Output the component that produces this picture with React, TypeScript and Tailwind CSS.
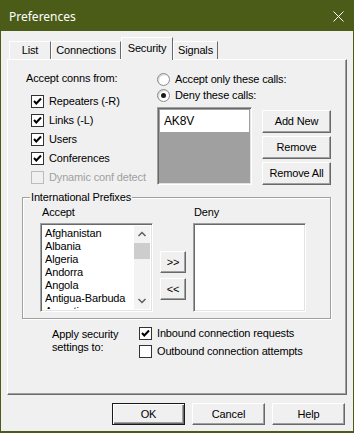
import React from "react";

function CheckBox({ checked, disabled }: { checked?: boolean; disabled?: boolean }) {
  return (
    <div
      className={
        "w-[13px] h-[13px] shrink-0 border flex items-center justify-center " +
        (disabled ? "border-[#bcbcbc] bg-[#f0f0f0]" : "border-[#333333] bg-white")
      }
    >
      {checked && (
        <svg width="11" height="11" viewBox="0 0 11 11">
          <path d="M2 5 L4.3 7.5 L9 2.5" stroke="#000" strokeWidth="2" fill="none" />
        </svg>
      )}
    </div>
  );
}

function Radio({ selected }: { selected?: boolean }) {
  return (
    <div className="w-[13px] h-[13px] shrink-0 rounded-full border border-[#8a8a8a] bg-white flex items-center justify-center shadow-[inset_1px_1px_1px_#d0d0d0]">
      {selected && <div className="w-[5px] h-[5px] rounded-full bg-[#1a1a1a]" />}
    </div>
  );
}

function Button({ children, className = "", primary }: { children: React.ReactNode; className?: string; primary?: boolean }) {
  return (
    <div
      className={
        "flex items-center justify-center bg-[#f0f0f0] text-black border whitespace-nowrap " +
        (primary
          ? "border-[#1a1a1a] shadow-[inset_1px_1px_0_white,inset_-1px_-1px_0_#696969,inset_-2px_-2px_0_#a0a0a0] "
          : "border-t-white border-l-white border-r-[#696969] border-b-[#696969] shadow-[inset_-1px_-1px_0_#a0a0a0] ") +
        className
      }
    >
      {children}
    </div>
  );
}

function Tab({ label, width, active }: { label: string; width: string; active?: boolean }) {
  return (
    <div
      className={
        "flex justify-center border-t border-l border-r border-t-white border-l-white border-r-[#696969] bg-[#f0f0f0] " +
        width +
        (active ? " h-[23px] -mb-px pt-[4px] relative z-10" : " h-[18px] pt-[2px]")
      }
    >
      <span className="leading-[13px] whitespace-nowrap">{label}</span>
    </div>
  );
}

const sunken =
  "border border-t-[#a0a0a0] border-l-[#a0a0a0] border-r-white border-b-white shadow-[inset_1px_1px_0_#696969,inset_-1px_-1px_0_#e3e3e3]";

export default function App() {
  const conns = [
    { label: "Repeaters (-R)", checked: true },
    { label: "Links (-L)", checked: true },
    { label: "Users", checked: true },
    { label: "Conferences", checked: true },
    { label: "Dynamic conf detect", disabled: true },
  ];
  const countries = ["Afghanistan", "Albania", "Algeria", "Andorra", "Angola", "Antigua-Barbuda", "Argentina"];

  return (
    <div className="w-[354px] h-[433px] bg-[#4b5c18] flex flex-col px-px pt-px pb-[2px] font-['Liberation_Sans',Arial,sans-serif] text-[11px] leading-[13px] tracking-[-0.15px] text-black overflow-hidden">
      {/* title bar */}
      <div className="h-[30px] shrink-0 flex items-center justify-between pl-[8px] pr-[9px]">
        <span className="text-white text-[12px] tracking-normal font-['Noto_Sans',sans-serif]">Preferences</span>
        <svg width="11" height="11" viewBox="0 0 11 11">
          <path d="M0.5 0.5 L10.5 10.5 M10.5 0.5 L0.5 10.5" stroke="#fff" strokeWidth="1" />
        </svg>
      </div>

      <div className="flex-1 bg-[#f0f0f0] flex flex-col">
        {/* tabs */}
        <div className="flex items-end h-[22px] mt-[6px] ml-[8px]">
          <Tab label="List" width="w-[42px]" />
          <Tab label="Connections" width="w-[70px]" />
          <Tab label="Security" width="w-[52px]" active />
          <Tab label="Signals" width="w-[45px]" />
        </div>

        {/* tab panel */}
        <div className="ml-[6px] w-[340px] h-[336px] border border-t-white border-l-white border-r-[#696969] border-b-[#696969] shadow-[inset_-1px_-1px_0_#a0a0a0] flex flex-col">
          <div className="flex pl-[18px]">
            <div className="w-[131px] pt-[11px]">
              <div className="leading-[14px]">Accept conns from:</div>
              <div className="mt-[7px] ml-[5px] flex flex-col">
                {conns.map((c) => (
                  <div key={c.label} className="h-[19px] flex items-center gap-[5px]">
                    <CheckBox checked={c.checked} disabled={c.disabled} />
                    <span className={"whitespace-nowrap " + (c.disabled ? "text-[#a0a0a0]" : "")}>{c.label}</span>
                  </div>
                ))}
              </div>
            </div>

            <div className="w-[105px] pt-[11px]">
              <div className="h-[16px] flex items-center gap-[5px]">
                <Radio />
                <span className="whitespace-nowrap">Accept only these calls:</span>
              </div>
              <div className="h-[16px] flex items-center gap-[5px]">
                <Radio selected />
                <span className="whitespace-nowrap">Deny these calls:</span>
              </div>
              <div className={"mt-[4px] w-[95px] h-[78px] bg-[#a0a0a0] p-[2px] " + sunken}>
                <div className="h-[22px] bg-white pl-[4px] flex items-center text-[12px]">AK8V</div>
              </div>
            </div>

            <div className="pt-[50px] flex flex-col gap-[3px]">
              <Button className="w-[69px] h-[23px]">Add New</Button>
              <Button className="w-[69px] h-[23px]">Remove</Button>
              <Button className="w-[69px] h-[23px]">Remove All</Button>
            </div>
          </div>

          {/* International prefixes group */}
          <div className="mt-[10px] ml-[14px] w-[309px] border border-[#a0a0a0] shadow-[inset_1px_1px_0_white,1px_1px_0_white] pb-[6px]">
            <span className="block w-fit -mt-[8px] ml-[7px] px-px bg-[#f0f0f0] leading-[14px] whitespace-nowrap">International Prefixes</span>
            <div className="flex pl-[17px]">
              <div className="flex flex-col">
                <div className="ml-[2px] mt-[1px] leading-[14px]">Accept</div>
                <div className={"mt-[4px] w-[113px] h-[89px] bg-white flex p-[2px] " + sunken}>
                  <div className="flex-1 overflow-hidden pl-[2px] pt-px">
                    {countries.map((c) => (
                      <div key={c} className="h-[13px] leading-[13px] whitespace-nowrap">{c}</div>
                    ))}
                  </div>
                  <div className="w-[16px] bg-[#f3f3f3] flex flex-col items-center">
                    <svg width="16" height="17" viewBox="0 0 16 17">
                      <path d="M4.5 10 L8 6.5 L11.5 10" stroke="#606060" strokeWidth="1.5" fill="none" />
                    </svg>
                    <div className="w-[16px] h-[16px] bg-[#cdcdcd]" />
                    <div className="flex-1" />
                    <svg width="16" height="17" viewBox="0 0 16 17">
                      <path d="M4.5 7 L8 10.5 L11.5 7" stroke="#606060" strokeWidth="1.5" fill="none" />
                    </svg>
                  </div>
                </div>
              </div>

              <div className="ml-[7px] mt-[47px] flex flex-col gap-[5px]">
                <Button className="w-[26px] h-[22px]">&gt;&gt;</Button>
                <Button className="w-[26px] h-[22px]">&lt;&lt;</Button>
              </div>

              <div className="ml-[7px] flex flex-col">
                <div className="ml-px mt-[1px] leading-[14px]">Deny</div>
                <div className={"mt-[4px] w-[113px] h-[89px] bg-white " + sunken} />
              </div>
            </div>
          </div>

          {/* apply settings */}
          <div className="flex mt-[5px]">
            <div className="ml-[44px] w-[87px] pt-[4px] leading-[13px]">
              Apply security
              <br />
              settings to:
            </div>
            <div className="flex flex-col">
              <div className="h-[18px] flex items-center gap-[5px]">
                <CheckBox checked />
                <span className="whitespace-nowrap">Inbound connection requests</span>
              </div>
              <div className="h-[18px] flex items-center gap-[5px]">
                <CheckBox />
                <span className="whitespace-nowrap">Outbound connection attempts</span>
              </div>
            </div>
          </div>
        </div>

        {/* dialog buttons */}
        <div className="flex justify-end gap-[7px] mt-[8px] pr-[8px]">
          <Button primary className="w-[73px] h-[22px]">OK</Button>
          <Button className="w-[73px] h-[22px]">Cancel</Button>
          <Button className="w-[73px] h-[22px]">Help</Button>
        </div>
      </div>
    </div>
  );
}
